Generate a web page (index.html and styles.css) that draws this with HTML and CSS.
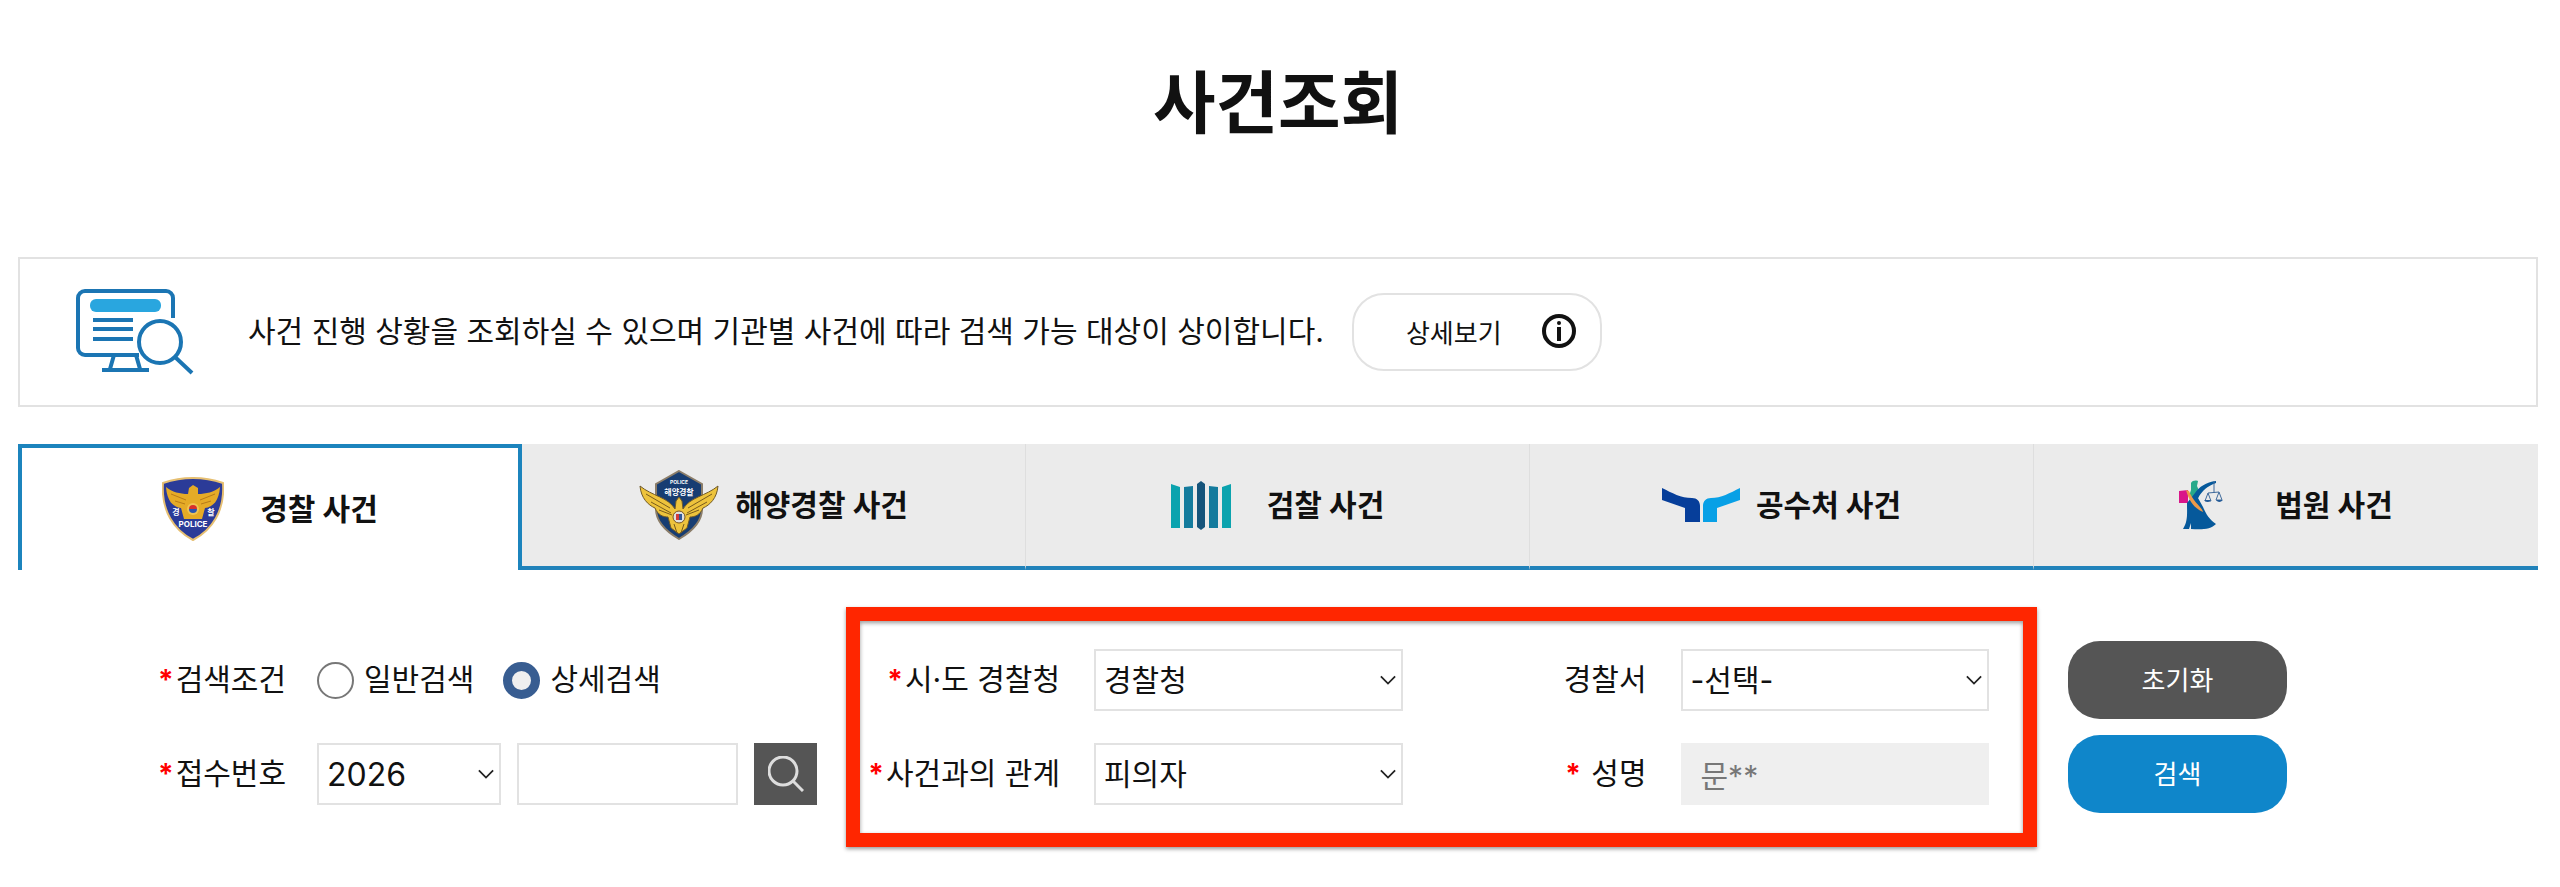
FILE: index.html
```html
<!DOCTYPE html>
<html lang="ko">
<head>
  <meta charset="UTF-8">
  <title>사건조회</title>
  <link rel="stylesheet" href="styles.css">
</head>
<body>
  <main class="container">
    <h1 class="page-title">사건조회</h1>

    <section class="notice">
      <svg class="notice-icon" viewBox="0 0 118 86" fill="none">
        <path d="M97 29V9a7 7 0 0 0-7-7H9a7 7 0 0 0-7 7v50a7 7 0 0 0 7 7h54" stroke="#1b75b3" stroke-width="4"/>
        <rect x="14" y="10" width="71" height="13" rx="6" fill="#29a6df"/>
        <path d="M17 31h40M17 40h40M17 50h40" stroke="#1b75b3" stroke-width="4"/>
        <path d="M38 66l-4 14M60 66l4 14M26 81h47" stroke="#1b75b3" stroke-width="4"/>
        <circle cx="84" cy="53" r="21" stroke="#1b75b3" stroke-width="4"/>
        <path d="M99 68l17 16" stroke="#1b75b3" stroke-width="4"/>
      </svg>
      <p class="notice-text">사건 진행 상황을 조회하실 수 있으며 기관별 사건에 따라 검색 가능 대상이 상이합니다.</p>
      <button type="button" class="detail-btn">
        상세보기
        <svg class="info-icon" viewBox="0 0 34 34">
          <circle cx="17" cy="17" r="15" fill="none" stroke="#111" stroke-width="4"/>
          <circle cx="17" cy="9" r="2" fill="#111"/>
          <rect x="15" y="13" width="4" height="14" fill="#111"/>
        </svg>
      </button>
    </section>

    <nav class="tabs">
      <a href="#police" class="tab active">
        <svg class="icon-police" viewBox="0 0 62 64">
          <path d="M1 6Q31-4 61 6C63 34 50 53 31 63C12 53-1 34 1 6z" fill="#2b3b98" stroke="#e6bf72" stroke-width="2"/>
          <path d="M4 10c6 5 14 7 22 7l1-6 4-3 5 3v6c8 0 16-2 22-7-1 14-7 20-15 21l-3 11H22l-3-11C11 30 5 24 4 10z" fill="#e5ab27"/>
          <path d="M9 17l15 6M13 24l10 3M53 17l-15 6M49 24l-10 3" stroke="#b77b18"/>
          <circle cx="31" cy="32" r="6" fill="#f0c453"/>
          <path d="M27 32a4 4 0 0 1 8 0z" fill="#d8302c"/>
          <path d="M27 32a4 4 0 0 0 8 0z" fill="#2a55ae"/>
          <text x="14" y="38" class="badge-text">경</text>
          <text x="49" y="38" class="badge-text">찰</text>
          <text x="31" y="50" class="badge-text">POLICE</text>
        </svg>
        <span>경찰 사건</span>
      </a>
      <a href="#coast" class="tab tab-wide">
        <svg class="icon-coast" viewBox="0 0 80 70">
          <path d="M40 1l23 13v25c0 14-11 23-23 30C28 62 17 53 17 39V14z" fill="#173d72" stroke="#8b7d69" stroke-width="2"/>
          <path d="M1 16c12 10 28 11 35 23l1-8 3-4 3 4 1 8c7-12 23-13 35-23-1 12-8 19-15 22-3 7-8 9-13 9l-3 11-8 6-8-6-3-11c-5 0-10-2-13-9C9 35 2 28 1 16z" fill="#edc33c" stroke="#6f5929"/>
          <path d="M7 24l24 14M12 32l20 11M20 40l13 5M73 24L49 38M68 32L48 43M60 40l-13 5M35 54l3 9M45 54l-3 9" stroke="#785b1d"/>
          <circle cx="40" cy="47" r="6" fill="#dfe0df" stroke="#77521d"/>
          <path d="M37 44h3v6h-3z" fill="#d43a3c"/>
          <path d="M40 44h3v6h-3z" fill="#315798"/>
          <text x="40" y="14" class="badge-text badge-small">POLICE</text>
          <text x="40" y="25" class="badge-text">해양경찰</text>
        </svg>
        <span>해양경찰 사건</span>
      </a>
      <a href="#prosecution" class="tab">
        <svg class="icon-prosecution" viewBox="0 0 60 50">
          <path d="M0 4l9 3v41H0zM60 4l-9 3v41h9z" fill="#0ba3ae"/>
          <path d="M13 7l9-1v42h-9zM38 6l9 1v41h-9z" fill="#147b9d"/>
          <path d="M26 4l4-3 4 3v43l-4 3-4-3z" fill="#15547b"/>
        </svg>
        <span>검찰 사건</span>
      </a>
      <a href="#cio" class="tab tab-wide">
        <svg class="icon-cio" viewBox="0 0 78 34">
          <path d="M0 0c10 5 19 10 30 10 5 0 8 3 8 8v16H23V20L0 12z" fill="#063e9a"/>
          <path d="M78 0C68 5 59 10 49 10c-5 0-8 3-8 8v16h14V20l23-8z" fill="#08a0e6"/>
        </svg>
        <span>공수처 사건</span>
      </a>
      <a href="#court" class="tab">
        <svg class="icon-court" viewBox="0 0 60 50">
          <path d="M12 3c1-3 6-3 7-2l-1 5 3 7-3 8-8-5 2-6z" fill="#27a98a"/>
          <path d="M0 11l9-1v13H0z" fill="#d91689"/>
          <path d="M37 1C27 2 20 7 16 13l-8 10c0 11 1 18-4 26h6l2-6v6c12 1 20 0 25-5-7-5-10-10-13-17l-5-9c4-7 9-12 18-15z" fill="#06599b"/>
          <path d="M7 10c3 11 8 18 17 22-1-5-10-10-14-21z" fill="#ee9a49"/>
          <path d="M35 1v12M29 13l11-1M29 13l-3 8h6zM40 12l-3 8h6z" fill="none" stroke="#416b9c"/>
          <path d="M25 20h7q-3 4-7 0zM37 20h7q-4 4-7 0z" fill="#245c98"/>
        </svg>
        <span>법원 사건</span>
      </a>
    </nav>

    <form class="search-form">
      <div class="fields fields-basic">
        <div class="row" role="radiogroup" aria-labelledby="condLabel">
          <span class="row-label" id="condLabel"><em>*</em>검색조건</span>
          <input type="radio" name="cond" id="condNormal">
          <label for="condNormal" class="radio-label">일반검색</label>
          <input type="radio" name="cond" id="condDetail" checked>
          <label for="condDetail" class="radio-label">상세검색</label>
        </div>
        <div class="row">
          <label class="row-label" for="year"><em>*</em>접수번호</label>
          <div class="select-box year-box">
            <select id="year"><option>2026</option></select>
            <svg class="arrow" viewBox="0 0 18 10"><path d="M1 1l8 8 8-8"/></svg>
          </div>
          <input type="text" class="number-input" aria-label="접수번호">
          <button type="button" class="find-btn" aria-label="찾기">
            <svg viewBox="0 0 36 36"><circle cx="15" cy="15" r="14"/><path d="M25 25l10 10"/></svg>
          </button>
        </div>
      </div>

      <div class="fields-detail">
        <label for="region"><em>*</em>시·도 경찰청</label>
        <div class="select-box">
          <select id="region"><option>경찰청</option></select>
          <svg class="arrow" viewBox="0 0 18 10"><path d="M1 1l8 8 8-8"/></svg>
        </div>
        <label for="station">경찰서</label>
        <div class="select-box">
          <select id="station"><option>-선택-</option></select>
          <svg class="arrow" viewBox="0 0 18 10"><path d="M1 1l8 8 8-8"/></svg>
        </div>
        <label for="relation"><em>*</em>사건과의 관계</label>
        <div class="select-box">
          <select id="relation"><option>피의자</option></select>
          <svg class="arrow" viewBox="0 0 18 10"><path d="M1 1l8 8 8-8"/></svg>
        </div>
        <label for="name"><em>*</em> 성명</label>
        <input type="text" id="name" value="문**" disabled>
      </div>

      <div class="fields form-buttons">
        <button type="reset" class="btn-reset">초기화</button>
        <button type="submit" class="btn-search">검색</button>
      </div>
    </form>
  </main>
</body>
</html>
```
FILE: styles.css
```css
* {
  box-sizing: border-box;
}

body {
  margin: 0;
  background: #fff;
  color: #111;
  font-family: Inter, "Noto Sans CJK KR", sans-serif;
  font-size: 30px;
  line-height: 40px;
}

button,
input,
select {
  margin: 0;
  font-family: inherit;
  font-size: 30px;
  color: inherit;
}

.container {
  padding: 53px 22px 40px 18px;
}

.page-title {
  margin: 0 0 104px;
  font-size: 68px;
  line-height: 100px;
  font-weight: bold;
  text-align: center;
}

/* notice */
.notice {
  display: flex;
  align-items: center;
  height: 150px;
  padding: 0 56px;
  border: 2px solid #e2e2e2;
}

.notice-icon {
  width: 118px;
  height: 86px;
}

.notice-text {
  margin: 0 28px 2px 54px;
}

.detail-btn {
  display: flex;
  align-items: center;
  justify-content: space-between;
  width: 250px;
  height: 78px;
  padding: 0 24px 2px 52px;
  border: 2px solid #e2e2e2;
  border-radius: 32px;
  background: #fff;
  font-size: 26px;
  cursor: pointer;
}

.info-icon {
  width: 34px;
  height: 34px;
}

/* agency tabs */
.tabs {
  display: grid;
  grid-template-columns: repeat(5, 1fr);
  margin-top: 37px;
}

.tab {
  display: flex;
  align-items: center;
  justify-content: center;
  gap: 36px;
  height: 126px;
  border-bottom: 4px solid #2182ba;
  border-right: 1px solid #dedede;
  background: #ebebeb;
  color: #111;
  font-weight: bold;
  text-decoration: none;
}

.tab:last-child {
  border-right: none;
}

.tab-wide {
  gap: 16px;
}

.tab.active {
  border: 4px solid #1c84bd;
  border-bottom: none;
  background: #fff;
}

.badge-text {
  fill: #fff;
  font-size: 8px;
  font-weight: bold;
  text-anchor: middle;
}

.badge-small {
  font-size: 5px;
}

.icon-police {
  width: 62px;
  height: 64px;
}

.icon-coast {
  width: 80px;
  height: 70px;
}

.icon-prosecution,
.icon-court {
  width: 60px;
  height: 50px;
}

.icon-cio {
  width: 78px;
  height: 34px;
}

/* search form */
.search-form {
  display: flex;
  align-items: center;
  margin-top: 37px;
  padding: 0 251px 0 140px;
}

.fields {
  display: grid;
  grid-auto-rows: 78px;
  row-gap: 16px;
}

.fields-basic {
  width: 688px;
}

.row {
  display: flex;
  align-items: center;
}

.row-label {
  width: 159px;
}

em {
  margin-right: 2px;
  font-size: 28px;
  line-height: 30px;
  color: #f00;
  font-style: normal;
  font-weight: bold;
}

input[type="radio"] {
  appearance: none;
  width: 37px;
  height: 37px;
  border: 2px solid #777;
  border-radius: 50%;
  background: #fff;
}

input[type="radio"]:checked {
  border: 9px solid #385d91;
  background: #efefef;
}

.radio-label {
  margin: 0 29px 0 10px;
}

.row-label,
.radio-label,
.fields-detail label {
  padding-bottom: 2px;
}

.select-box {
  position: relative;
}

.year-box {
  width: 184px;
}

.year-box select {
  font-size: 32px;
}

select,
input[type="text"] {
  display: block;
  width: 100%;
  height: 62px;
  border: 2px solid #e2e2e2;
  border-radius: 0;
  background: #fff;
}

select {
  appearance: none;
  padding: 0 34px 0 8px;
}

.arrow {
  position: absolute;
  right: 7px;
  top: 26px;
  width: 16px;
  height: 10px;
  fill: none;
  stroke: #222;
  stroke-width: 2;
  pointer-events: none;
}

.row .number-input {
  width: 221px;
  margin: 0 16px;
}

.find-btn {
  display: flex;
  align-items: center;
  justify-content: center;
  width: 63px;
  height: 62px;
  padding: 0;
  border: none;
  background: #555;
  cursor: pointer;
}

.find-btn svg {
  width: 36px;
  height: 36px;
  fill: none;
  stroke: #ddd;
  stroke-width: 3;
}

.fields-detail {
  flex: 1;
  display: grid;
  grid-template-columns: 200px 1fr 210px 1fr;
  grid-auto-rows: 78px;
  gap: 16px 34px;
  align-items: center;
  padding: 20px 34px 20px 0;
  border: 14px solid #ff2600;
  box-shadow: 0 2px 4px rgba(0, 0, 0, 0.4), inset 0 2px 4px rgba(0, 0, 0, 0.4);
}

.fields-detail label {
  text-align: right;
}

.fields-detail input[type="text"] {
  padding: 0 20px;
  border: none;
  background: #efefef;
  color: #777;
}

.form-buttons {
  width: 219px;
  margin-left: 31px;
}

.form-buttons button {
  padding-bottom: 4px;
  border: none;
  border-radius: 32px;
  color: #fff;
  font-size: 26px;
  cursor: pointer;
}

.btn-reset {
  background: #555;
}

.btn-search {
  background: #0f86ca;
}
```
